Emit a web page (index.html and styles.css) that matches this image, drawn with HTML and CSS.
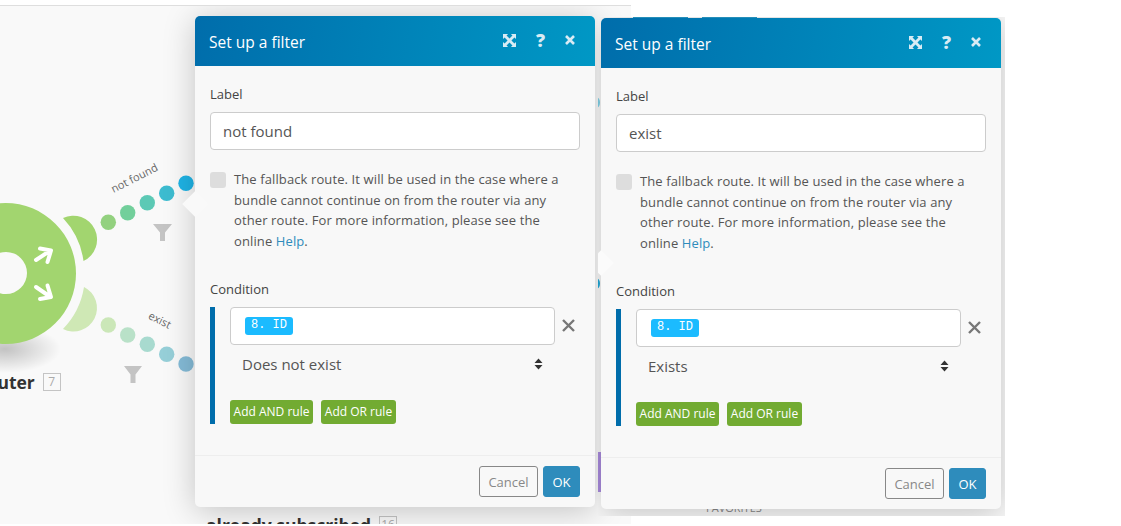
FILE: index.html
```html
<!DOCTYPE html>
<html lang="en">
<head>
<meta charset="utf-8">
<title>Set up a filter</title>
<link rel="stylesheet" href="styles.css">
</head>
<body>
<div class="stage">
  <div class="canvas">
    <svg class="diagram" width="631" height="518" viewBox="0 6 631 518" aria-hidden="true">
      <defs>
        <radialGradient id="sh"><stop offset="0" stop-color="#000" stop-opacity=".22"/><stop offset="1" stop-color="#000" stop-opacity="0"/></radialGradient>
      </defs>
      <ellipse cx="5" cy="349" rx="56" ry="24" fill="url(#sh)"/>
      <path fill="#a2d56f" fill-rule="evenodd" d="M5.5 203a70.5 70.5 0 1 1 0 141a70.5 70.5 0 1 1 0-141zM6 252a21 21 0 1 0 0 42a21 21 0 1 0 0-42z"/>
      <path fill="#a2d56f" d="M63 218A22.5 22.5 0 1 1 83.5 261A78 78 0 0 0 63 218Z"/>
      <path fill="#cfe8b5" d="M84 287A22.5 22.5 0 0 1 63 329A78 78 0 0 0 84 287Z"/>
      <g fill="none" stroke="#fff" stroke-width="4" stroke-linecap="round" stroke-linejoin="round">
        <path d="M36 260L50.5 250.5M40 248.5L51 250.5L47.5 262"/>
        <path d="M36 287L50.5 297M47.5 285.5L51 297L40 299"/>
      </g>
      <circle cx="108.3" cy="222.3" r="7.7" fill="#93d17f"/><circle cx="127.7" cy="212.7" r="7.7" fill="#72cf9b"/><circle cx="147.3" cy="202.7" r="7.7" fill="#5cc9b5"/><circle cx="166.7" cy="193.3" r="7.7" fill="#3dbcd0"/><circle cx="186" cy="183.3" r="7.7" fill="#1fb4e6"/>
      <circle cx="108.3" cy="325" r="7.7" fill="#cbe7b8"/><circle cx="127.7" cy="335" r="7.7" fill="#b9e1c8"/><circle cx="147.3" cy="344.3" r="7.7" fill="#a8dacf"/><circle cx="166.7" cy="354.3" r="7.7" fill="#96cfd8"/><circle cx="186" cy="364" r="7.7" fill="#85bcd8"/>
      <path fill="#c4c4c4" d="M153 224H172L165 232.500V241H160V232.500Z"/>
      <path fill="#c4c4c4" d="M124 366H142L135.500 374.500V383H130.500V374.500Z"/>
    </svg>
    <span class="route-label route-up">not found</span>
    <span class="route-label route-down">exist</span>
    <div class="node node-router"><span class="node-name">Router</span><span class="node-num">7</span></div>
    <div class="node node-sub"><span class="node-name">already subscribed</span><span class="node-num">16</span></div>

    <section class="modal modal-first">
      <header class="modal-head">
        <h2 class="modal-title">Set up a filter</h2>
        <svg class="ico-expand" width="13" height="13" viewBox="0 0 14 14" aria-hidden="true"><path fill="#d8ebf4" d="M0 0H5.500L3.800 1.700L7 4.900L10.200 1.700L8.500 0H14V5.500L12.300 3.800L9.100 7L12.300 10.200L14 8.500V14H8.500L10.200 12.300L7 9.100L3.800 12.300L5.500 14H0V8.500L1.700 10.200L4.900 7L1.700 3.800L0 5.500Z"/></svg>
        <span class="ico-help">?</span>
        <svg class="ico-close" width="10" height="10" viewBox="0 0 10 10" aria-hidden="true"><path stroke="#d8ebf4" stroke-width="2.600" d="M1 1L9 9M9 1L1 9"/></svg>
      </header>
      <div class="modal-body">
        <label class="field-label">Label</label>
        <div class="text-input">not found</div>
        <div class="fallback">
          <span class="checkbox"></span>
          <p class="fallback-text">The fallback route. It will be used in the case where a bundle cannot continue on from the router via any other route. For more information, please see the online <a class="help-link">Help</a>.</p>
        </div>
        <label class="field-label cond-label">Condition</label>
        <div class="cond">
          <div class="cond-row">
            <div class="cond-input"><span class="tag">8. ID</span></div>
            <svg class="cond-x" width="13" height="13" viewBox="0 0 13 13" aria-hidden="true"><path stroke="#777" stroke-width="2.400" d="M1 1L12 12M12 1L1 12"/></svg>
          </div>
          <div class="select-row">
            <span class="select-value">Does not exist</span>
            <svg width="9" height="12" viewBox="0 0 9 12" aria-hidden="true"><path fill="#333" d="M4.500 0.500L8.500 5H0.500ZM0.500 7H8.500L4.500 11.500Z"/></svg>
          </div>
          <div class="rule-buttons">
            <span class="rule-btn rule-and">Add AND rule</span>
            <span class="rule-btn rule-or">Add OR rule</span>
          </div>
        </div>
      </div>
      <footer class="modal-foot">
        <span class="btn btn-cancel">Cancel</span>
        <span class="btn btn-ok">OK</span>
      </footer>
    </section>
  </div>

  <div class="snip">
    <span class="tab tab-a"></span>
    <span class="tab tab-b"></span>
    <span class="peek peek-a"></span>
    <span class="peek peek-b"></span>
    <span class="peek-bar"></span>
    <span class="favorites">FAVORITES</span>
    <section class="modal modal-second">
      <header class="modal-head">
        <h2 class="modal-title">Set up a filter</h2>
        <svg class="ico-expand" width="13" height="13" viewBox="0 0 14 14" aria-hidden="true"><path fill="#d8ebf4" d="M0 0H5.500L3.800 1.700L7 4.900L10.200 1.700L8.500 0H14V5.500L12.300 3.800L9.100 7L12.300 10.200L14 8.500V14H8.500L10.200 12.300L7 9.100L3.800 12.300L5.500 14H0V8.500L1.700 10.200L4.900 7L1.700 3.800L0 5.500Z"/></svg>
        <span class="ico-help">?</span>
        <svg class="ico-close" width="10" height="10" viewBox="0 0 10 10" aria-hidden="true"><path stroke="#d8ebf4" stroke-width="2.600" d="M1 1L9 9M9 1L1 9"/></svg>
      </header>
      <div class="modal-body">
        <label class="field-label">Label</label>
        <div class="text-input">exist</div>
        <div class="fallback">
          <span class="checkbox"></span>
          <p class="fallback-text">The fallback route. It will be used in the case where a bundle cannot continue on from the router via any other route. For more information, please see the online <a class="help-link">Help</a>.</p>
        </div>
        <label class="field-label cond-label">Condition</label>
        <div class="cond">
          <div class="cond-row">
            <div class="cond-input"><span class="tag">8. ID</span></div>
            <svg class="cond-x" width="13" height="13" viewBox="0 0 13 13" aria-hidden="true"><path stroke="#777" stroke-width="2.400" d="M1 1L12 12M12 1L1 12"/></svg>
          </div>
          <div class="select-row">
            <span class="select-value">Exists</span>
            <svg width="9" height="12" viewBox="0 0 9 12" aria-hidden="true"><path fill="#333" d="M4.500 0.500L8.500 5H0.500ZM0.500 7H8.500L4.500 11.500Z"/></svg>
          </div>
          <div class="rule-buttons">
            <span class="rule-btn rule-and">Add AND rule</span>
            <span class="rule-btn rule-or">Add OR rule</span>
          </div>
        </div>
      </div>
      <footer class="modal-foot">
        <span class="btn btn-cancel">Cancel</span>
        <span class="btn btn-ok">OK</span>
      </footer>
    </section>
  </div>
</div>
</body>
</html>
```
FILE: styles.css
```css
* { box-sizing: border-box; }
html, body { margin: 0; padding: 0; background: #fff; }
body { font-family: "Open Sans", "Noto Sans", sans-serif; color: #444; }
.stage { position: relative; width: 1121px; height: 526px; overflow: hidden; background: #fff; }

.canvas { position: absolute; left: 0; top: 5px; width: 631px; height: 519px; overflow: hidden; background: #f9f9f9; border-top: 1px solid #dedede; }
.diagram { position: absolute; left: 0; top: 0; }
.route-label { position: absolute; font-size: 11px; line-height: 14px; color: #666; white-space: nowrap; }
.route-up { left: 109px; top: 165px; transform: rotate(-27deg); }
.route-down { left: 148px; top: 307px; transform: rotate(27deg); }
.node { position: absolute; display: flex; align-items: center; gap: 8px; white-space: nowrap; }
.node-name { font-size: 17.500px; font-weight: 700; line-height: 20px; color: #333; }
.node-num { display: block; min-width: 18px; border: 1px solid #c4c4c4; color: #aaa; font-size: 12px; line-height: 16px; padding: 0 1px; text-align: center; }
.node-router { left: -25px; top: 366px; }
.node-sub { left: 206px; top: 509px; }

.modal { position: absolute; width: 400px; height: 491px; display: flex; flex-direction: column; background: #f8f8f8; border-radius: 5px; box-shadow: 0 4px 32px rgba(0,0,0,.22); }
.modal::before { content: ""; position: absolute; left: -9px; width: 18px; height: 18px; background: #f9f9f9; transform: rotate(45deg); }
.modal-first { left: 195px; top: 10px; }
.modal-first::before { top: 179px; }
.modal-second { left: 3px; top: 1px; }
.modal-second::before { top: 236px; background: #fbfbfb; }
.modal-head { position: relative; flex: none; height: 50px; display: flex; align-items: center; padding: 0 20px 0 14px; background: linear-gradient(100deg, #006dab, #0098c5); border-radius: 5px 5px 0 0; }
.modal-title { flex: 1; margin: 2px 0 0; font-size: 15.500px; font-weight: 400; line-height: 20px; color: #fff; }
.ico-expand { flex: none; margin-top: -2px; margin-right: 18px; }
.ico-help { flex: none; width: 13px; margin-right: 18px; font-size: 18px; font-weight: 800; line-height: 20px; color: #d8ebf4; text-align: center; margin-top: -2px; }
.ico-close { flex: none; margin-top: -2px; }

.modal-body { flex: 1; padding: 19px 15px 0; }
.field-label { display: block; font-size: 13px; line-height: 18px; color: #444; }
.text-input { height: 38px; margin-top: 9px; padding: 0 12px; background: #fff; border: 1px solid #ccc; border-radius: 4px; font-size: 15px; line-height: 36px; color: #555; }
.fallback { display: flex; gap: 8px; margin-top: 19px; }
.checkbox { flex: none; width: 16px; height: 16px; margin-top: 3px; background: #ddd; border-radius: 3px; }
.fallback-text { width: 340px; margin: 0; font-size: 13px; letter-spacing: 0.110px; line-height: 20.700px; color: #555; }
.help-link { color: #2e8cbc; }
.cond-label { margin-top: 28px; }
.cond { height: 117px; margin-top: 9px; padding-left: 15px; border-left: 5px solid #006dab; }
.cond-row { display: flex; align-items: center; gap: 7px; }
.cond-input { width: 325px; height: 38px; padding: 9px 14px; background: #fff; border: 1px solid #ccc; border-radius: 4px; }
.tag { display: block; width: 48px; height: 18px; background: #1bbbff; border-radius: 3px; color: #fff; font-family: "Liberation Mono", monospace; font-size: 12px; line-height: 17px; text-align: center; }
.select-row { display: flex; align-items: center; justify-content: space-between; width: 325px; height: 38px; padding: 0 12px; }
.select-value { font-size: 15px; line-height: 20px; color: #555; }
.rule-buttons { display: flex; gap: 8px; margin-top: 17px; }
.rule-btn { display: block; height: 24px; background: #72ab32; border-radius: 3px; color: #fff; font-size: 12px; line-height: 24px; text-align: center; white-space: nowrap; }
.rule-and { width: 83px; }
.rule-or { width: 75px; }

.modal-foot { flex: none; height: 52px; display: flex; justify-content: flex-end; gap: 5px; padding: 10px 15px 0; border-top: 1px solid #eee; }
.btn { display: block; height: 31px; border-radius: 3px; font-size: 13px; line-height: 30px; text-align: center; }
.btn-cancel { width: 59px; border: 1px solid #888; color: #888; }
.btn-ok { width: 37px; background: #2e8cbc; border: 1px solid #2e8cbc; color: #fff; }

.snip { position: absolute; left: 598px; top: 17px; width: 407px; height: 499px; overflow: hidden; background: #f9f9f9; }
.tab { position: absolute; top: 0; width: 55px; height: 1px; background: #2a9bc9; }
.tab-a { left: 35px; }
.tab-b { left: 104px; }
.peek { position: absolute; left: -6px; width: 8px; height: 11px; border-radius: 50%; background: #7fd0e6; }
.peek-a { top: 80px; }
.peek-b { top: 261px; background: #20a8d8; }
.peek-bar { position: absolute; left: 0; top: 435px; width: 3px; height: 40px; background: #a98bdd; }
.favorites { position: absolute; left: 108px; top: 484px; font-size: 11px; line-height: 14px; color: #888; }
```
